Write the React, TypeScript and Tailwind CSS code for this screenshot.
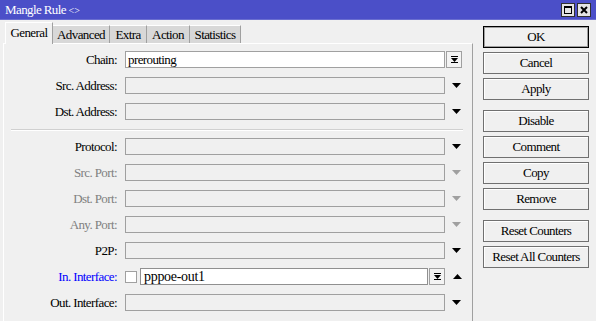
import React from "react";

function DownTri({ gray }: { gray?: boolean }) {
  return (
    <svg width="9" height="5" viewBox="0 0 9 5" className="block">
      <polygon points="0,0 9,0 4.5,5" fill={gray ? "#a0a0a0" : "#000"} />
    </svg>
  );
}

function UpTri() {
  return (
    <svg width="9" height="5" viewBox="0 0 9 5" className="block">
      <polygon points="0,5 9,5 4.5,0" fill="#000" />
    </svg>
  );
}

function BarDown() {
  return (
    <svg width="7" height="7" viewBox="0 0 7 7" className="block">
      <rect x="0" y="0" width="7" height="1" fill="#000" />
      <polygon points="0,2 7,2 3.5,6" fill="#000" />
      <rect x="0" y="6" width="7" height="1" fill="#000" />
    </svg>
  );
}

type RowProps = {
  label: string;
  labelClass?: string;
  gray?: boolean;
};

function Row({ label, labelClass = "text-black", gray }: RowProps) {
  return (
    <div className="flex items-center h-[17px]">
      <div className={`w-[113px] text-right leading-none ${labelClass}`}>{label}</div>
      <div className="ml-[8px] w-[320px] h-[17px] border border-[#a0a0a0] bg-[#f0f0f0]" />
      <div className="ml-[7px]">
        <DownTri gray={gray} />
      </div>
    </div>
  );
}

function Btn({ children, def }: { children: React.ReactNode; def?: boolean }) {
  return (
    <div
      className={`h-[22px] w-[106px] flex items-center justify-center bg-[#f0f0f0] border ${
        def ? "border-black shadow-[inset_0_0_0_1px_#a0a0a0]" : "border-[#707070] shadow-[inset_1px_1px_0_#ffffff]"
      }`}
    >
      {children}
    </div>
  );
}

export default function App() {
  return (
    <div className="w-[596px] h-[321px] bg-[#f0f0f0] overflow-hidden flex flex-col text-black font-['Liberation_Serif',serif] text-[13px] tracking-[-0.6px]">
      {/* title bar */}
      <div className="h-[20px] bg-[#4b4fc8] flex items-center text-white shrink-0 border-b border-[#6a6ed0]">
        <div className="pl-[5px] leading-none">
          Mangle Rule <span className="text-[10px] tracking-normal">&lt;&gt;</span>
        </div>
        <div className="flex-1" />
        <div className="flex gap-[2px] mr-[5px]">
          <div className="w-[14px] h-[14px] bg-[#e4e4e4] border border-[#303030] flex items-center justify-center">
            <div className="w-[8px] h-[8px] border border-black border-t-2" />
          </div>
          <div className="w-[14px] h-[14px] bg-[#e4e4e4] border border-[#303030] flex items-center justify-center">
            <svg width="8" height="8" viewBox="0 0 8 8">
              <path d="M1 1 L7 7 M7 1 L1 7" stroke="#000" strokeWidth="2" />
            </svg>
          </div>
        </div>
      </div>

      <div className="flex flex-1">
        {/* left tab area */}
        <div className="ml-[3px] w-[470px] flex flex-col">
          <div className="h-[23px] flex items-end pl-[2px] relative z-10">
            <div className="w-[48px] h-[22px] bg-[#f0f0f0] border-l border-t border-white border-r border-r-[#a0a0a0] -mb-px flex items-center justify-center pb-[2px]">
              General
            </div>
            <div className="w-[57px] h-[18px] bg-[#d8d8d8] border-t border-r border-white border-r-[#a0a0a0] flex items-center justify-center">
              Advanced
            </div>
            <div className="w-[37px] h-[18px] bg-[#d8d8d8] border-t border-r border-white border-r-[#a0a0a0] flex items-center justify-center">
              Extra
            </div>
            <div className="w-[43px] h-[18px] bg-[#d8d8d8] border-t border-r border-white border-r-[#a0a0a0] flex items-center justify-center">
              Action
            </div>
            <div className="w-[51px] h-[18px] bg-[#d8d8d8] border-t border-r border-white border-r-[#a0a0a0] flex items-center justify-center">
              Statistics
            </div>
          </div>
          <div className="flex-1 border-l border-t border-white border-r border-r-[#a0a0a0] pt-[7px] flex flex-col">
            {/* Chain */}
            <div className="flex items-center h-[17px]">
              <div className="w-[113px] text-right leading-none">Chain:</div>
              <div className="ml-[8px] w-[320px] h-[17px] border border-[#a0a0a0] bg-white flex items-center pl-[2px] leading-none">
                prerouting
              </div>
              <div className="ml-[1px] w-[16px] h-[17px] border border-[#a0a0a0] bg-[#f4f4f4] flex items-center justify-center">
                <BarDown />
              </div>
            </div>
            <div className="mt-[9px]">
              <Row label="Src. Address:" />
            </div>
            <div className="mt-[9px]">
              <Row label="Dst. Address:" />
            </div>
            <div className="mt-[9px] ml-[7px] w-[452px] h-[2px] border-t border-[#d0d0d0] border-b border-b-white" />
            <div className="mt-[7px]">
              <Row label="Protocol:" />
            </div>
            <div className="mt-[9px]">
              <Row label="Src. Port:" labelClass="text-[#808080]" gray />
            </div>
            <div className="mt-[9px]">
              <Row label="Dst. Port:" labelClass="text-[#808080]" gray />
            </div>
            <div className="mt-[9px]">
              <Row label="Any. Port:" labelClass="text-[#808080]" gray />
            </div>
            <div className="mt-[9px]">
              <Row label="P2P:" />
            </div>
            {/* In. Interface */}
            <div className="mt-[9px] flex items-center h-[17px]">
              <div className="w-[113px] text-right leading-none text-[#0000ff]">In. Interface:</div>
              <div className="ml-[8px] w-[12px] h-[12px] border border-[#a0a0a0] bg-white" />
              <div className="ml-[3px] w-[288px] h-[17px] border border-[#909090] bg-white flex items-center pl-[3px] leading-none text-[14px] tracking-[-0.3px]">
                pppoe-out1
              </div>
              <div className="ml-[1px] w-[16px] h-[17px] border border-[#a0a0a0] bg-[#f4f4f4] flex items-center justify-center">
                <BarDown />
              </div>
              <div className="ml-[8px]">
                <UpTri />
              </div>
            </div>
            <div className="mt-[9px]">
              <Row label="Out. Interface:" />
            </div>
          </div>
        </div>

        {/* right buttons */}
        <div className="ml-[10px] pt-[6px] flex flex-col">
          <div className="flex flex-col gap-[4px]">
            <Btn def>OK</Btn>
            <Btn>Cancel</Btn>
            <Btn>Apply</Btn>
          </div>
          <div className="mt-[10px] flex flex-col gap-[4px]">
            <Btn>Disable</Btn>
            <Btn>Comment</Btn>
            <Btn>Copy</Btn>
            <Btn>Remove</Btn>
          </div>
          <div className="mt-[10px] flex flex-col gap-[4px]">
            <Btn>Reset Counters</Btn>
            <Btn>Reset All Counters</Btn>
          </div>
        </div>
      </div>
    </div>
  );
}
